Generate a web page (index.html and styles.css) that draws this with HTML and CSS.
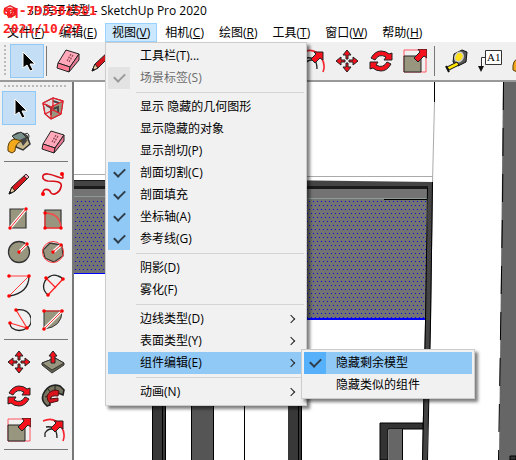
FILE: index.html
```html
<!DOCTYPE html>
<html lang="zh-CN">
<head>
  <meta charset="UTF-8" />
  <meta name="viewport" content="width=device-width, initial-scale=1.0" />
  <title>3D房子模型 - SketchUp Pro 2020</title>
  <link rel="stylesheet" href="styles.css">
</head>
<body>
  <!-- icon set -->
  <svg class="sprite" aria-hidden="true">
    <symbol id="i-select" viewBox="0 0 24 24">
      <path d="M8 3v16l4-3 3 6 3-1-3-6h5z" fill="#000" stroke="#fff" stroke-width="1" />
    </symbol>
    <symbol id="i-component" viewBox="0 0 24 24">
      <path d="M2 7l10-5 10 3-2 13-10 5-6-5z" fill="#ddd" stroke="#333" />
      <path d="M10 11l12-6-2 13-10 5z" fill="#99967f" />
      <path d="M5 9l5 3v7M12 5l6 2M12 13l5-2v6" fill="none" stroke="#444" stroke-width="2" />
      <path d="M2 7l10-5 10 3-2 13-10 5-6-5zM2 7l8 4 12-6M10 11v12M4 18l8-4 8 4M12 2v12" fill="none" stroke="#e8202c" stroke-width="1.3" />
    </symbol>
    <symbol id="i-paint" viewBox="0 0 24 24">
      <path d="M7 5q7-5 13 1l3 8-7 6-7-3z" fill="#c9b98a" stroke="#333" stroke-width="1.5" />
      <path d="M5 6l9-4 6 6-9 4z" fill="#78908c" stroke="#333" />
      <path d="M13 10l6-3 1 4-4 5z" fill="#444" />
      <path d="M17 5q4-4 5 1l-1 5" fill="none" stroke="#333" />
      <path d="M1 21q-1-10 6-12l8 2q-7 2-7 10l-3 2z" fill="#f4a81c" stroke="#553c08" />
    </symbol>
    <symbol id="i-eraser" viewBox="0 0 24 24">
      <path d="M10 1l13 4-9 13-12-4z" fill="#ffa9ba" stroke="#222" />
      <path d="M2 14l12 4-1 5-12-4z" fill="#ff7c95" stroke="#222" />
      <path d="M14 18l9-13v6l-10 12z" fill="#e77992" stroke="#222" />
      <path d="M11 12l4-7M13 13l4-7" stroke="#8b4656" stroke-width="1.2" stroke-dasharray="2 1" />
    </symbol>
    <symbol id="i-pencil" viewBox="0 0 24 24">
      <path d="M2 22l3-7L19 2l3 3L8 19z" fill="#d5161d" stroke="#222" />
      <path d="M2 22l3-7 3 4z" fill="#e5c69c" stroke="#222" />
      <path d="M17 4l2-2 3 3-2 2z" fill="#f5a8b2" stroke="#333" />
      <path d="M2 22l1-3 2 2z" fill="#111" />
    </symbol>
    <symbol id="i-freehand" viewBox="0 0 24 24">
      <path d="M21 2C25 11 16 3 7 2 0 1 0 8 7 9c6 0 15 0 13 6-1 5-7 9-10 6-2-5-9-5-8 1" fill="none" stroke="#d8101a" stroke-width="1.6" />
      <circle cx="21" cy="2" r="2" fill="#f00" /><circle cx="2" cy="22" r="2" fill="#f00" />
    </symbol>
    <symbol id="i-rect" viewBox="0 0 24 24">
      <path d="M3 3h16v19H3z" fill="#99967f" stroke="#333" stroke-width="1.2" />
      <path d="M3 22L19 3" stroke="#fff" stroke-width="3" /><path d="M3 22L19 3" stroke="#f22" />
      <circle cx="3" cy="22" r="1.7" fill="#f00" /><circle cx="19" cy="3" r="1.7" fill="#f00" />
    </symbol>
    <symbol id="i-rotrect" viewBox="0 0 24 24">
      <path d="M4 4h16v18H4z" fill="#99967f" stroke="#333" stroke-width="1.2" />
      <path d="M4 22V7q15 0 16 15z" fill="none" stroke="#ff4545" stroke-width="1.3" />
      <circle cx="4" cy="7" r="1.7" fill="#f00" /><circle cx="4" cy="22" r="1.7" fill="#f00" /><circle cx="20" cy="22" r="1.7" fill="#f00" />
    </symbol>
    <symbol id="i-circle" viewBox="0 0 24 24">
      <circle cx="12" cy="12" r="10.5" fill="#99967f" stroke="#333" stroke-width="1.3" />
      <path d="M12 12l8-8" stroke="#fff" stroke-width="3" /><path d="M12 12l8-8" stroke="#f22" />
      <circle cx="12" cy="12" r="1.7" fill="#f00" /><circle cx="20" cy="4" r="1.7" fill="#f00" />
    </symbol>
    <symbol id="i-polygon" viewBox="0 0 24 24">
      <path d="M2 10l7-7 12 2 1 11-9 6-9-4z" fill="#99967f" stroke="#333" stroke-width="1.3" />
      <circle cx="12" cy="12" r="10.5" fill="none" stroke="#ff3b3b" />
      <path d="M12 12l8-7" stroke="#fff" stroke-width="3" /><path d="M12 12l8-7" stroke="#f22" />
      <circle cx="12" cy="12" r="1.7" fill="#f00" /><circle cx="20" cy="5" r="1.7" fill="#f00" />
    </symbol>
    <symbol id="i-arc" viewBox="0 0 24 24">
      <path d="M22 2q0 17-20 20" fill="none" stroke="#222" stroke-width="1.3" />
      <path d="M2 2h20L2 22" fill="none" stroke="#ff4040" />
      <circle cx="2" cy="2" r="1.8" fill="#f00" /><circle cx="22" cy="2" r="1.8" fill="#f00" /><circle cx="2" cy="22" r="1.8" fill="#f00" />
    </symbol>
    <symbol id="i-arc2" viewBox="0 0 24 24">
      <path d="M7 21Q0 15 4 7 10-1 17 2q4 1 5 4" fill="none" stroke="#222" stroke-width="1.3" />
      <path d="M7 21L22 5M5 4l10 10" stroke="#f22" stroke-width="1.3" />
      <circle cx="7" cy="21" r="1.8" fill="#f00" /><circle cx="22" cy="5" r="1.8" fill="#f00" /><circle cx="5" cy="4" r="1.8" fill="#f00" />
    </symbol>
    <symbol id="i-arc3" viewBox="0 0 24 24">
      <path d="M9 2q12-2 15 8 1 7-4 10-8 5-15 0-2-2-2-5" fill="none" stroke="#222" stroke-width="1.3" />
      <path d="M9 2l11 18L3 15" fill="none" stroke="#f33" stroke-width="1.2" />
      <circle cx="9" cy="2" r="1.8" fill="#f00" /><circle cx="20" cy="20" r="1.8" fill="#f00" /><circle cx="3" cy="15" r="1.8" fill="#f00" />
    </symbol>
    <symbol id="i-pie" viewBox="0 0 24 24">
      <path d="M3 3h18q0 16-18 18z" fill="#99967f" stroke="#333" />
      <path d="M3 21L21 3" stroke="#fff" stroke-width="3" /><path d="M3 3h18L3 21" fill="none" stroke="#f33" />
      <circle cx="3" cy="3" r="1.8" fill="#f00" /><circle cx="21" cy="3" r="1.8" fill="#f00" /><circle cx="3" cy="21" r="1.8" fill="#f00" />
    </symbol>
    <symbol id="i-move" viewBox="0 0 24 24">
      <g fill="#f5121c" stroke="#222" stroke-width="1">
        <path d="M12 1l4 5h-3v4h-2V6H8z" />
        <path d="M23 12l-5 4v-3h-4v-2h4V8z" />
        <path d="M12 23l-4-5h3v-4h2v4h3z" />
        <path d="M1 12l5-4v3h4v2H6v3z" />
      </g>
    </symbol>
    <symbol id="i-push" viewBox="0 0 24 24">
      <path d="M1 13l13-5 9 5v2l-12 8-10-8z" fill="#666451" stroke="#333" />
      <path d="M1 13l13-5 9 5-12 7z" fill="#99967f" stroke="#333" />
      <path d="M12 1l4 5h-2v7h-4V6H8z" fill="#f5121c" stroke="#222" />
    </symbol>
    <symbol id="i-rotate" viewBox="0 0 24 24">
      <g fill="#f5121c" stroke="#222" stroke-width="1">
        <path d="M2 9Q6 2 12 2q5 0 8 3l3-1v7h-8l2-3q-7-4-11 3z" />
        <path d="M22 15q-4 7-10 7-5 0-8-3l-3 1v-7h8l-2 3q7 4 11-3z" />
      </g>
    </symbol>
    <symbol id="i-follow" viewBox="0 0 24 24">
      <path d="M6 22Q-2 15 4 7 10-1 19 2l4 4-1 5-5-2Q8 7 9 21z" fill="#77745f" stroke="#222" stroke-width="1.6" />
      <path d="M4 13l6-3M7 5l4 5M14 2v6" stroke="#222" />
      <path d="M6 12q3-6 9-6l3 1-1 5q-7-1-8 3l8-1v3l-8 2q-3-2-3-7z" fill="#d8141d" stroke="#501010" />
    </symbol>
    <symbol id="i-scale" viewBox="0 0 24 24">
      <path d="M1 1h22v22H1z" fill="none" stroke="#ff5262" />
      <path d="M1 7h17v16H1z" fill="#99967f" stroke="#222" />
      <path d="M24 0v9l-3-2-6 6-4-4 6-6-2-3z" fill="#f5121c" stroke="#222" />
    </symbol>
    <symbol id="i-offset" viewBox="0 0 24 24">
      <path d="M2 3q11-5 18 5 5 8 2 15" fill="none" stroke="#f5222c" stroke-width="1.6" />
      <path d="M5 9q11-2 11 11M4 19v-4q4-6 10-3" fill="none" stroke="#222" stroke-width="1.3" />
      <path d="M22 3v8l-3-2-5 5-4-4 5-5-2-2z" fill="#f5121c" stroke="#222" />
    </symbol>
    <symbol id="i-tape" viewBox="0 0 24 24">
      <path d="M10 5l8-4 5 2-1 10-8 4-5-4z" fill="#555" stroke="#111" />
      <ellipse cx="15" cy="8" rx="4" ry="5" fill="#ffe01a" stroke="#ccc" stroke-width="1.5" transform="rotate(25 15 8)" />
      <path d="M13 13l2 3-10 5-2-3z" fill="#ffe600" stroke="#111" />
      <path d="M2 17l3 6" stroke="#111" stroke-width="2" />
    </symbol>
    <symbol id="i-text" viewBox="0 0 24 24">
      <path d="M7.500 1.500h16v14h-16zM7 8.500H3.500V19" fill="#fff" stroke="#333" />
      <path d="M0 17h6l-3 6z" fill="#111" />
      <text x="9" y="12" class="icon-text">A1</text>
    </symbol>
  </svg>

  <div class="app">
    <header class="title-bar">
      <svg class="logo" viewBox="0 0 14 14">
        <path d="M1 4l6-3 6 3v7l-5 3-4-2V8L1 7z" fill="#e51a22" />
        <path d="M3 5l4-2 4 2-4 2zM7 9l3-1v3" fill="none" stroke="#fff" />
      </svg>
      <h1>3D房子模型 - SketchUp Pro 2020</h1>
    </header>

    <nav class="menu-bar">
      <button>文件(<u>F</u>)</button>
      <button>编辑(<u>E</u>)</button>
      <div class="menu-holder">
        <button class="open">视图(<u>V</u>)</button>
        <div class="menu">
          <button class="item">工具栏(T)...</button>
          <label class="item disabled"><input type="checkbox" checked disabled />场景标签(S)</label>
          <hr />
          <label class="item"><input type="checkbox" />显示 隐藏的几何图形</label>
          <label class="item"><input type="checkbox" />显示隐藏的对象</label>
          <label class="item"><input type="checkbox" />显示剖切(P)</label>
          <label class="item"><input type="checkbox" checked />剖面切割(C)</label>
          <label class="item"><input type="checkbox" checked />剖面填充</label>
          <label class="item"><input type="checkbox" checked />坐标轴(A)</label>
          <label class="item"><input type="checkbox" checked />参考线(G)</label>
          <hr />
          <label class="item"><input type="checkbox" />阴影(D)</label>
          <label class="item"><input type="checkbox" />雾化(F)</label>
          <hr />
          <button class="item more">边线类型(D)</button>
          <button class="item more">表面类型(Y)</button>
          <div class="sub-holder">
            <button class="item more active">组件编辑(E)</button>
            <div class="menu submenu">
              <label class="item active"><input type="checkbox" checked />隐藏剩余模型</label>
              <label class="item"><input type="checkbox" />隐藏类似的组件</label>
            </div>
          </div>
          <hr />
          <button class="item more">动画(N)</button>
        </div>
      </div>
      <button>相机(<u>C</u>)</button>
      <button>绘图(<u>R</u>)</button>
      <button>工具(<u>T</u>)</button>
      <button>窗口(<u>W</u>)</button>
      <button>帮助(<u>H</u>)</button>
    </nav>

    <div class="toolbar">
      <span class="grip"></span>
      <button class="tool selected" aria-label="选择"><svg><use href="#i-select" /></svg></button>
      <span class="divider"></span>
      <button class="tool" aria-label="擦除"><svg><use href="#i-eraser" /></svg></button>
      <button class="tool" aria-label="直线"><svg><use href="#i-pencil" /></svg></button>
      <button class="tool" aria-label="圆弧"><svg><use href="#i-arc" /></svg></button>
      <button class="tool" aria-label="矩形"><svg><use href="#i-rect" /></svg></button>
      <button class="tool" aria-label="圆"><svg><use href="#i-circle" /></svg></button>
      <span class="divider"></span>
      <button class="tool" aria-label="推拉"><svg><use href="#i-push" /></svg></button>
      <button class="tool" aria-label="路径跟随"><svg><use href="#i-follow" /></svg></button>
      <button class="tool" aria-label="偏移"><svg><use href="#i-offset" /></svg></button>
      <button class="tool" aria-label="移动"><svg><use href="#i-move" /></svg></button>
      <button class="tool" aria-label="旋转"><svg><use href="#i-rotate" /></svg></button>
      <button class="tool" aria-label="缩放"><svg><use href="#i-scale" /></svg></button>
      <span class="divider"></span>
      <button class="tool" aria-label="卷尺"><svg><use href="#i-tape" /></svg></button>
      <button class="tool" aria-label="文字"><svg><use href="#i-text" /></svg></button>
      <button class="tool" aria-label="材质"><svg><use href="#i-paint" /></svg></button>
    </div>

    <main>
      <aside class="palette">
        <span class="grip"></span>
        <div class="tools">
          <button class="tool selected" aria-label="选择"><svg><use href="#i-select" /></svg></button>
          <button class="tool" aria-label="组件"><svg><use href="#i-component" /></svg></button>
          <button class="tool" aria-label="材质"><svg><use href="#i-paint" /></svg></button>
          <button class="tool" aria-label="擦除"><svg><use href="#i-eraser" /></svg></button>
        </div>
        <hr />
        <div class="tools">
          <button class="tool" aria-label="直线"><svg><use href="#i-pencil" /></svg></button>
          <button class="tool" aria-label="手绘线"><svg><use href="#i-freehand" /></svg></button>
          <button class="tool" aria-label="矩形"><svg><use href="#i-rect" /></svg></button>
          <button class="tool" aria-label="旋转矩形"><svg><use href="#i-rotrect" /></svg></button>
          <button class="tool" aria-label="圆"><svg><use href="#i-circle" /></svg></button>
          <button class="tool" aria-label="多边形"><svg><use href="#i-polygon" /></svg></button>
          <button class="tool" aria-label="圆弧"><svg><use href="#i-arc" /></svg></button>
          <button class="tool" aria-label="两点圆弧"><svg><use href="#i-arc2" /></svg></button>
          <button class="tool" aria-label="三点圆弧"><svg><use href="#i-arc3" /></svg></button>
          <button class="tool" aria-label="扇形"><svg><use href="#i-pie" /></svg></button>
        </div>
        <hr />
        <div class="tools">
          <button class="tool" aria-label="移动"><svg><use href="#i-move" /></svg></button>
          <button class="tool" aria-label="推拉"><svg><use href="#i-push" /></svg></button>
          <button class="tool" aria-label="旋转"><svg><use href="#i-rotate" /></svg></button>
          <button class="tool" aria-label="路径跟随"><svg><use href="#i-follow" /></svg></button>
          <button class="tool" aria-label="缩放"><svg><use href="#i-scale" /></svg></button>
          <button class="tool" aria-label="偏移"><svg><use href="#i-offset" /></svg></button>
        </div>
        <hr />
      </aside>

      <svg class="viewport" viewBox="74 82 442 378" preserveAspectRatio="xMinYMin slice">
        <defs>
          <pattern id="dots" width="4" height="8" patternUnits="userSpaceOnUse">
            <path d="M0 0h4v8H0z" fill="#737373" />
            <path d="M1 1h1v1H1zM3 5h1v1H3z" fill="#0000d8" />
          </pattern>
        </defs>
        <!-- beam -->
        <path d="M74 174h200v1H74z" fill="#aaa" />
        <path d="M274 176h159v1H274z" fill="#aaa" />
        <path d="M74 180h200l159 2v8H74z" fill="#444" />
        <path d="M74 180h150v1H74zM74 186h354v3H74z" fill="#1a1a1a" />
        <path d="M74 189h354v10H74z" fill="#737373" />
        <path d="M74 196h232v1H74zM306 198h122v1H306z" fill="#8c9a9a" />
        <path d="M384 199h43v1H384z" fill="#000" />
        <!-- wall section -->
        <path d="M74 198h200v75H74z" fill="url(#dots)" />
        <path d="M274 199h153l-1 119H274z" fill="url(#dots)" />
        <path d="M384 199h43v1H384z" fill="#000" />
        <path d="M74 273h200v1H74zM274 318h152v2H274z" fill="#00f" />
        <!-- column -->
        <path d="M428 187l5-5-2 140-4 138h-5l3-138z" fill="#444" />
        <path d="M432.500 182l-2 140-3 138M427.500 188l-2 134-3 138" fill="none" stroke="#000" />
        <path d="M434.500 82v20" stroke="#000" />
        <path d="M434.500 102l-2 80" stroke="#aaa" />
        <!-- right wall -->
        <path d="M503 82h13v378h-17z" fill="#666" />
        <path d="M503.500 82l-1 130-4 248" fill="none" stroke="#000" stroke-dasharray="28 18" />
        <path d="M510 456h6v4h-6z" fill="#333" stroke="#000" />
        <!-- door frames -->
        <path d="M380 423h43v6h-35v31h-8z" fill="#333" stroke="#000" />
        <path d="M389 429h13v31h-13z" fill="#666" />
        <path d="M402.500 429v31" stroke="#000" />
        <path d="M152 400h14v60h-14zM288 400h13v60h-13z" fill="#383838" />
        <path d="M152.500 400v60M162.500 400v60M165.500 400v60M298.500 400v60M301.500 400v60" stroke="#000" />
        <path d="M191 400h22v60h-22z" fill="#555" />
        <path d="M191.500 400v60M213.500 400v60M244.500 400v60" stroke="#000" />
      </svg>
    </main>
  </div>

  <div class="watermark">
    <p>qq-793382581</p>
    <p>2021/10/27</p>
  </div>
</body>
</html>
```

FILE: styles.css
```css
* {
  box-sizing: border-box;
}

body {
  margin: 0;
  font-family: "Open Sans", "Noto Sans CJK SC", sans-serif;
  font-size: 12px;
  line-height: 18px;
  color: #000;
  background-color: #fff;
  overflow: hidden;
}

button {
  margin: 0;
  padding: 0;
  border: 0;
  background: none;
  font: inherit;
  color: inherit;
  text-align: left;
  white-space: nowrap;
}

.sprite {
  position: absolute;
  width: 0;
  height: 0;
}

.icon-text {
  font-family: "Liberation Serif", serif;
  font-size: 11px;
}

.app {
  display: flex;
  flex-direction: column;
  height: 100vh;
}

/* title and menu bar */
.title-bar {
  display: flex;
  align-items: center;
  flex: none;
  gap: 10px;
  height: 21px;
  padding-left: 3px;
}

.title-bar h1 {
  margin: 0;
  font-size: 12px;
  font-weight: normal;
  white-space: nowrap;
}

.logo {
  width: 14px;
  height: 14px;
}

.menu-bar {
  display: flex;
  flex: none;
  gap: 1px;
  height: 21px;
  padding-top: 2px;
}

.menu-bar > button,
.menu-holder > button {
  height: 19px;
  padding: 0 7px;
}

.menu-holder {
  position: relative;
}

.menu-holder > .open {
  background-color: #cce8ff;
  box-shadow: inset 0 0 0 1px #99d1ff;
}

/* drop-down menus */
.menu {
  position: absolute;
  top: 100%;
  left: 0;
  z-index: 2;
  width: 202px;
  padding: 2px;
  border: 1px solid #ccc;
  background-color: #f1f1f1;
  box-shadow: 3px 3px 3px rgba(0, 0, 0, 0.5);
}

.item {
  display: flex;
  align-items: center;
  width: 100%;
  height: 22px;
  white-space: nowrap;
}

button.item {
  padding-left: 32px;
}

.item input {
  appearance: none;
  display: flex;
  align-items: center;
  justify-content: center;
  width: 22px;
  height: 22px;
  margin: 0 10px 0 0;
}

.item input:checked {
  background-color: #90c8f6;
}

.item input:checked::before {
  content: "";
  width: 9px;
  height: 5px;
  margin-bottom: 3px;
  border: solid #2f3d4a;
  border-width: 0 0 2px 2px;
  transform: rotate(-45deg);
}

.item.disabled {
  color: #6d6d6d;
}

.item.disabled input:checked {
  background-color: #e3e3e3;
}

.item.disabled input:checked::before {
  border-color: #999;
}

.item.active {
  background-color: #90c8f6;
}

.item.active input:checked {
  background-color: #56b0fa;
}

.more {
  justify-content: space-between;
  padding-right: 10px;
}

.more::after {
  content: "";
  width: 5px;
  height: 5px;
  border-top: 1px solid #222;
  border-right: 1px solid #222;
  transform: rotate(45deg);
}

.menu hr {
  height: 1px;
  margin: 3px 0 3px 28px;
  border: 0;
  background-color: #d4d4d4;
}

.sub-holder {
  position: relative;
}

.submenu {
  top: -3px;
  left: 193px;
  width: 174px;
}

/* tools */
.toolbar {
  display: flex;
  align-items: center;
  flex: none;
  height: 40px;
  border-bottom: 2px solid #999;
  background-color: #f0f0f0;
  overflow: hidden;
}

.toolbar .grip {
  flex: none;
  width: 2px;
  height: 32px;
  margin: 0 4px;
  background: repeating-linear-gradient(#bbb 0 2px, #f0f0f0 2px 4px);
}

.divider {
  flex: none;
  width: 1px;
  height: 30px;
  margin: 0 4px 0 2px;
  background-color: #777;
}

.tool {
  display: flex;
  align-items: center;
  justify-content: center;
  flex: none;
  width: 34px;
  height: 34px;
}

.tool svg {
  width: 24px;
  height: 24px;
}

.tool.selected {
  border: 1px solid #90c8f6;
  background-color: #c4dff5;
}

main {
  display: flex;
  flex: 1;
  min-height: 0;
}

.palette {
  flex: none;
  width: 74px;
  padding: 0 2px;
  border-right: 2px solid #777;
  background-color: #f0f0f0;
}

.palette .grip {
  display: block;
  height: 2px;
  margin: 3px 2px 4px;
  background: repeating-linear-gradient(90deg, #bbb 0 2px, #f0f0f0 2px 4px);
}

.tools {
  display: grid;
  grid-template-columns: 34px 34px;
}

.palette hr {
  height: 1px;
  margin: 2px 2px 5px;
  border: 0;
  background-color: #777;
}

.viewport {
  flex: 1;
  min-width: 0;
  height: 100%;
}

/* stamp over the window */
.watermark {
  position: absolute;
  top: 2px;
  left: 3px;
  z-index: 3;
  font-family: "DejaVu Sans Mono", monospace;
  font-size: 13px;
  font-weight: bold;
  color: #f22;
  pointer-events: none;
}

.watermark p {
  margin: 0;
}
```
